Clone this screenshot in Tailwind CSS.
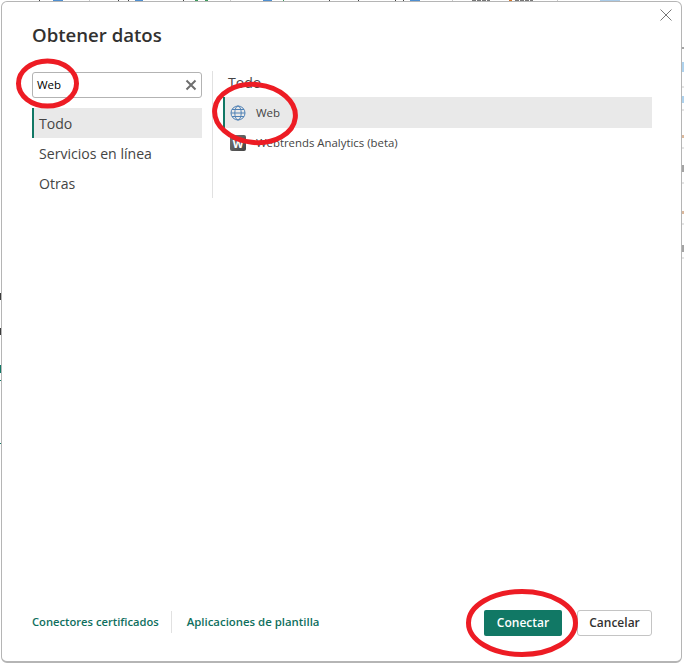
<!DOCTYPE html>
<html lang="en">
<head>
  <meta charset="UTF-8" />
  <title>Obtener datos</title>
  <script src="https://cdn.jsdelivr.net/npm/@tailwindcss/browser@4"></script>
</head>
<body class="bg-white font-['Open_Sans',sans-serif] text-[#252423]">
  <div class="relative w-[684px] h-[664px] overflow-hidden">
    <!-- bits of the sheet behind the dialog -->
    <svg class="absolute inset-0" width="684" height="664" fill="none" stroke-width="1">
      <path stroke="#444" d="M39.5 0v1M118.5 0v1M128.5 0v1M183.5 0v1M329.5 0v1M358.5 0v1M395.5 0v1M403.5 0v1"/>
      <path stroke="#777" stroke-dasharray="4 1" d="M472 .5h18M515 .5h18"/>
      <path stroke="#4f8fd0" d="M53 .5h10M135 .5h8M263 .5h9M410 .5h10"/>
      <path stroke="#a9cbe8" d="M600 .5h20"/>
      <path stroke="#3a9a5c" d="M195 .5h3M205 .5h3M283.5 0v1"/>
      <path stroke="#c9c9c9" d="M89.5 0v1M230.5 0v1M452.5 0v1M557.5 0v1"/>
      <path stroke="#d2762a" d="M509 .5h3"/>
      <path stroke="#4a4a4a" d="M683 47v2M683 165v7M683 245v7"/>
      <path stroke="#5da5dc" d="M683 62v10M683 96v7"/>
      <path stroke="#c9c9c9" d="M682 87h2M682 110h2M682 148h2M682 183h2M682 224h2M682 258h2"/>
      <path stroke="#b8733a" d="M683 135v3M683 211v3"/>
      <path stroke="#3b3b3b" d="M.5 293v7M.5 328v7"/>
      <path stroke="#117865" d="M.5 365v8M.5 380v1M.5 443v1"/>
    </svg>
    <!-- dialog -->
    <div class="absolute left-[1px] top-[1px] w-[681px] h-[662px] bg-white border border-[#b5b5b5] border-b-2 rounded-[6px] flex flex-col pl-[30px] pr-[29px]">
      <button class="absolute right-[8px] top-[6px] text-[#777]">
        <svg class="block" width="14" height="14" viewBox="0 0 14 14" fill="none" stroke="currentColor" stroke-width="1"><path d="M1.5 1.5l11 11M12.5 1.5l-11 11"/></svg>
      </button>
      <h1 class="mt-[20px] h-[26px] text-[18.6px] leading-[26px] font-semibold text-[#323130]">Obtener datos</h1>
      <div class="flex mt-[24px] h-[128px]">
        <div class="w-[170px] mr-[10px]">
          <div class="h-[26px] border border-[#b3b3b3] rounded-[3px] flex items-center justify-between pl-[4px] pr-[4px]">
            <span class="text-[11.5px] text-black">Web</span>
            <svg width="12" height="12" viewBox="0 0 12 12" fill="none" stroke="#6e6e6e" stroke-width="2"><path d="M1.5 1.5l9 9M10.5 1.5l-9 9"/></svg>
          </div>
          <div class="mt-[10px] flex flex-col text-[14.1px]">
            <div class="h-[30px] leading-[32px] bg-[#e9e9e9] border-l-2 border-[#117865] pl-[5px] text-[#444]">Todo</div>
            <div class="h-[30px] leading-[32px] pl-[7px] text-[#444]">Servicios en línea</div>
            <div class="h-[30px] leading-[32px] pl-[7px] text-[#444]">Otras</div>
          </div>
        </div>
        <div class="w-px bg-[#e1e1e1] h-[127px] -mt-[1px]"></div>
        <div class="flex-1 pl-[10px]">
          <div class="h-[25px] pl-[5px] text-[14.1px] leading-[22px] text-[#444]">Todo</div>
          <div class="h-[31px] bg-[#e9e9e9] border-l-2 border-[#117865] flex items-center pl-[5px] text-[11.5px] text-[#444]">
            <svg width="16" height="16" viewBox="0 0 16 16" fill="none" stroke="#4f81b5" stroke-width="1">
              <circle cx="8" cy="8" r="7"/><ellipse cx="8" cy="8" rx="3.2" ry="7"/><path d="M1 8h14M2 4.5h12M2 11.5h12"/>
            </svg>
            <span class="ml-[10px]">Web</span>
          </div>
          <div class="h-[30px] flex items-center pl-[7px] text-[11.4px] text-[#444]">
            <div class="w-[16px] h-[16px] bg-linear-to-br from-[#777] to-[#444] rounded-[2px] flex items-center justify-center text-white text-[11px] leading-none font-bold">W</div>
            <span class="ml-[10px]">Webtrends Analytics (beta)</span>
          </div>
        </div>
      </div>
      <div class="mt-auto mb-[25px] h-[26px] flex items-center">
        <a class="mb-[2px] text-[11.2px] font-semibold text-[#0f6f5e]">Conectores certificados</a>
        <div class="w-px h-[22px] bg-[#e1e1e1] ml-[12px] mr-[15px] mb-[2px]"></div>
        <a class="mb-[2px] text-[11.4px] font-semibold text-[#0f6f5e]">Aplicaciones de plantilla</a>
        <div class="ml-auto flex gap-[15px]">
          <button class="w-[78px] h-[26px] bg-[#117865] rounded-[2px] text-white text-[12px] font-semibold">Conectar</button>
          <button class="w-[75px] h-[26px] bg-white border border-[#c4c4c4] rounded-[3px] text-[#323130] text-[12px] font-semibold">Cancelar</button>
        </div>
      </div>
    </div>
    <!-- hand drawn marks over the dialog -->
    <svg class="absolute inset-0" width="684" height="664" fill="none" stroke="#ed1c24" stroke-width="5">
      <ellipse cx="47.5" cy="83.5" rx="29" ry="22.5"/>
      <ellipse cx="255" cy="113.5" rx="40.5" ry="29" transform="rotate(6 255 113.5)"/>
      <ellipse cx="522" cy="623" rx="53.5" ry="31.5"/>
    </svg>
  </div>
</body>
</html>
